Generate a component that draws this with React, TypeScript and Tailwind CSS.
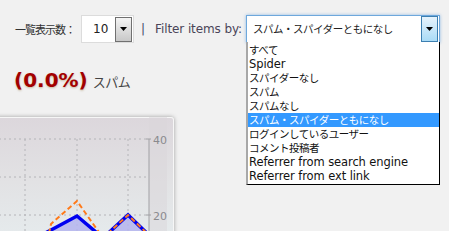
import React from "react";

const options = [
    "すべて",
    "Spider",
    "スパイダーなし",
    "スパム",
    "スパムなし",
    "スパム・スパイダーともになし",
    "ログインしているユーザー",
    "コメント投稿者",
    "Referrer from search engine",
    "Referrer from ext link",
];

const selectedIndex = 5;

const jp = "font-['Noto_Sans_CJK_JP',sans-serif] text-[10.5px] tracking-[-0.5px]";

function ArrowButton({ tone }: { tone: "gray" | "blue" }) {
    const cls =
        tone === "gray"
            ? "border-[#707070] bg-gradient-to-b from-[#f4f4f4] to-[#c8c8c8]"
            : "border-[#3c7fb1] bg-gradient-to-b from-[#e6f3fc] to-[#a9dbf6]";
    return (
        <div className={`flex h-full w-[17px] items-center justify-center border ${cls}`}>
            <svg width="7" height="4" viewBox="0 0 7 4">
                <path d="M0 0h7L3.5 4z" fill="#000" />
            </svg>
        </div>
    );
}

function Chart() {
    // coordinates are relative to the panel's top-left corner (page y - 117)
    const blue = "0,140 51,113 77,99 103,121 128,98 154,123 154,140";
    return (
        <div className="relative ml-[-6px] mt-[26px] h-[130px] w-[180px] rounded-tr-[3px] border border-[#f6f6f6] bg-gradient-to-b from-[#dcd7dc] via-[#e2e2e4] to-[#e6ecee] shadow-[0_0_4px_rgba(0,0,0,0.35)]">
            <svg width="180" height="130" viewBox="0 0 180 130" className="absolute left-[-1px] top-[-1px]">
                <g transform="translate(6,0)" fontFamily="'DejaVu Sans', sans-serif">
                    {[22, 60, 98].map((y) => (
                        <line key={y} x1="-6" y1={y} x2="149" y2={y} stroke="#b4b4b8" strokeDasharray="2 3" />
                    ))}
                    {[25, 77, 128].map((x) => (
                        <line key={x} x1={x} y1="22" x2={x} y2="130" stroke="#b4b4b8" strokeDasharray="2 3" />
                    ))}
                    <rect x="149" y="0" width="18" height="130" fill="#d9d5da" opacity="0.5" />
                    <line x1="149" y1="22" x2="149" y2="130" stroke="#a0a0a4" />
                    <line x1="146" y1="22" x2="151" y2="22" stroke="#a0a0a4" />
                    <line x1="146" y1="98" x2="151" y2="98" stroke="#a0a0a4" />
                    <text x="153" y="26.5" fontSize="11" fill="#8a8a8e">40</text>
                    <text x="153" y="102.5" fontSize="11" fill="#8a8a8e">20</text>
                    <polygon points={blue} fill="#b4b4ee" opacity="0.85" />
                    <polyline
                        points="0,140 51,113 77,99 103,121 128,98 154,123"
                        fill="none"
                        stroke="#0000f0"
                        strokeWidth="3.5"
                        strokeLinejoin="miter"
                    />
                    <polyline
                        points="44,140 51,107 77,84 103,121 128,98 154,123"
                        fill="none"
                        stroke="#ff7a1a"
                        strokeWidth="2"
                        strokeDasharray="5 3"
                    />
                </g>
            </svg>
        </div>
    );
}

export default function App() {
    return (
        <div className="relative h-[231px] w-[449px] overflow-hidden whitespace-nowrap bg-[#f1f1f1] font-['DejaVu_Sans','Noto_Sans_CJK_JP',sans-serif] text-[11px] text-[#222]">
            <div className="flex h-[43px] items-center pl-[15px] pt-[15px]">
                <span className={`shrink-0 text-[#333] ${jp} text-[11px] tracking-[-1px]`}>一覧表示数：</span>
                <div className="ml-[6px] flex h-[28px] w-[53px] shrink-0 items-center border border-[#dcdcdc] bg-white">
                    <span className="flex-1 pl-[11px] text-[12px] text-[#222]">10</span>
                    <div className="h-[25px] pr-[1px]">
                        <ArrowButton tone="gray" />
                    </div>
                </div>
                <span className="ml-[7px] shrink-0 text-[12px] text-[#3e4c66]">|</span>
                <span className="ml-[10px] shrink-0 text-[12px] tracking-[-0.1px] text-[#4a4458]">Filter items by:</span>
                <div className="relative ml-[4px] flex h-[28px] w-[194px] shrink-0 items-center border border-[#6ea8dc] bg-white shadow-[0_0_3px_rgba(80,150,220,0.6)]">
                    <span className={`flex-1 pl-[6px] ${jp}`}>スパム・スパイダーともになし</span>
                    <div className="h-[26px] pr-[1px]">
                        <ArrowButton tone="blue" />
                    </div>
                    <ul className="absolute left-[-1px] top-[26px] z-10 w-[194px] border-b border-l-2 border-r border-b-black border-l-[#a8a8a8] border-r-black bg-white pb-[1px] pt-[1px]">
                        {options.map((o, i) => {
                            const isJp = /[^\x00-\x7f]/.test(o);
                            return (
                                <li
                                    key={o}
                                    className={`h-[14px] pl-[1px] leading-[14px] ${
                                        isJp ? jp : "text-[11.5px] tracking-[-0.1px]"
                                    } ${i === selectedIndex ? "bg-[#3399ff] text-white" : "text-[#111]"}`}
                                >
                                    {o}
                                </li>
                            );
                        })}
                    </ul>
                </div>
            </div>

            <div className="mt-[27px] flex h-[22px] items-baseline pl-[14px]">
                <span className="text-[20px] font-bold leading-none text-[#a30000] [text-shadow:0_1px_2px_rgba(120,80,0,0.35)]">
                    (0.0%)
                </span>
                <span className="ml-[5px] font-['Noto_Sans_CJK_JP',sans-serif] text-[13px] tracking-[-0.5px] text-[#444]">スパム</span>
            </div>

            <div className="-mt-[1px]">
                <Chart />
            </div>
        </div>
    );
}
